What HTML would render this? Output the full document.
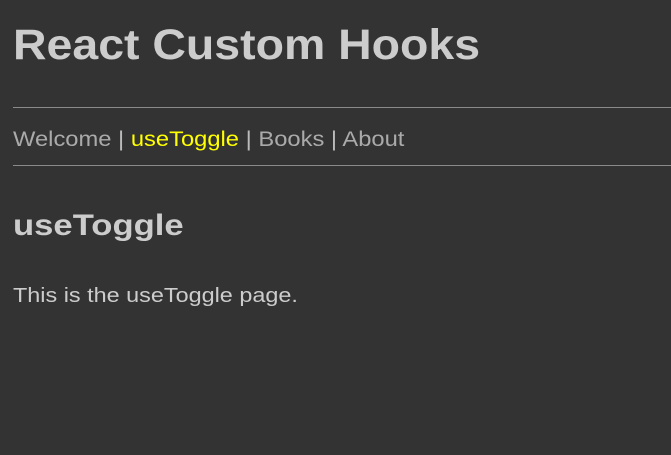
<!DOCTYPE html>
<html><head><style>
html,body{margin:0;padding:0;width:671px;height:455px;background:#333;overflow:hidden;font-family:"Liberation Sans",sans-serif;color:#ccc}
.a{position:absolute;left:13px;white-space:nowrap;transform-origin:0 0}
h1{margin:0;font-size:43px;font-weight:bold;top:21px;transform:scaleX(1.08)}
.hr{position:absolute;left:13px;right:0;height:1px;background:#8a8a8a}
.nav{top:128px;font-size:21px;color:#bbb;transform:scaleX(1.13)}
.nav span{color:#aaa}
.nav .y{color:#ffff00}
h2{margin:0;font-size:30px;font-weight:bold;top:209px;transform:scaleX(1.155)}
p{margin:0;font-size:20px;top:285px;transform:scaleX(1.17)}
</style></head><body>
<h1 class="a">React Custom Hooks</h1>
<div class="hr" style="top:107px"></div>
<div class="a nav"><span>Welcome</span> | <span class="y">useToggle</span> | <span>Books</span> | <span>About</span></div>
<div class="hr" style="top:165px"></div>
<h2 class="a">useToggle</h2>
<p class="a">This is the useToggle page.</p>
</body></html>
